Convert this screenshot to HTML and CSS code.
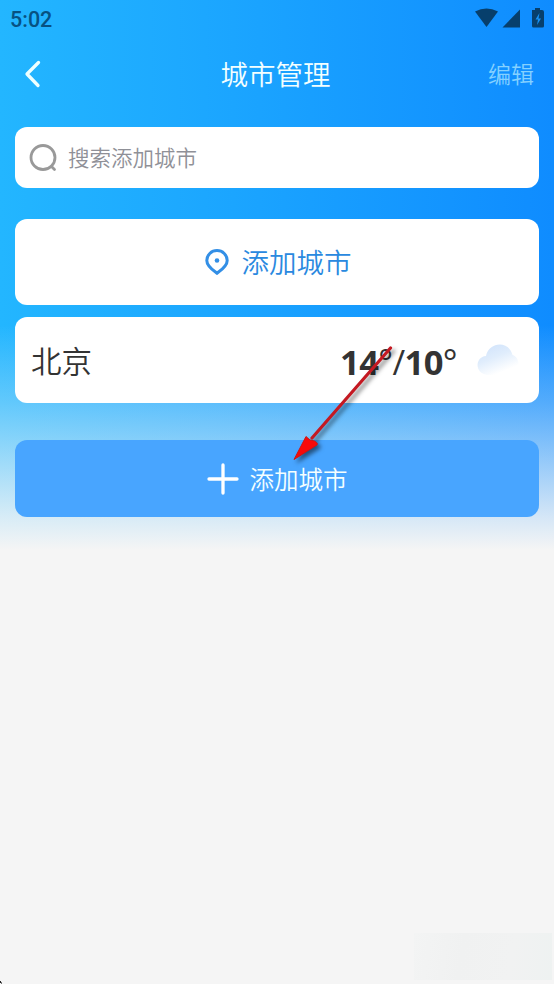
FILE: index.html
```html
<!DOCTYPE html>
<html lang="zh-CN">
<head>
<meta charset="utf-8">
<title>城市管理</title>
<link rel="stylesheet" href="styles.css">
</head>
<body>
<div class="screen">
  <header class="status">
    <span class="clock">5:02</span>
    <svg class="status-icons" width="70" height="22" viewBox="0 0 70 22">
      <path d="M0 3.500Q11.500-2.500 23 3.500L11.500 19Z"/>
      <path d="M45 1.500V19.500H27.500Z"/>
      <path d="M57 2H60V0H65V2H67Q69 2 69 4V18Q69 19.500 67.500 19.500H58.500Q57 19.500 57 18V4Q57 2 57 2Z"/>
      <path class="bolt" d="M64.500 5L60.500 11.500H63L62 17L66 10.500H63.500Z"/>
    </svg>
  </header>
  <nav class="nav">
    <svg class="back" width="18" height="28" viewBox="0 0 18 28"><path d="M14.500 2.500L3 14L14 25.500"/></svg>
    <h1 class="title">城市管理</h1>
    <span class="edit">编辑</span>
  </nav>
  <main class="content">
    <div class="search">
      <svg class="glass" width="28" height="28" viewBox="0 0 28 28"><circle cx="14" cy="13.500" r="12"/><path d="M22.500 22.500L25.500 25.500"/></svg>
      <span>搜索添加城市</span>
    </div>
    <div class="card add-card">
      <svg class="pin" width="24" height="26" viewBox="0 0 24 26"><path d="M12 24.200C8.500 21.500 1.800 17.500 1.800 11.500A10.200 9.900 0 0 1 22.200 11.500C22.200 17.500 15.500 21.500 12 24.200Z"/><circle cx="12" cy="11.500" r="2.300"/></svg>
      <span>添加城市</span>
    </div>
    <div class="card city-card">
      <span class="city">北京</span>
      <span class="temp">14<i>°</i><i>/</i>10<i>°</i></span>
      <svg class="cloud" width="42" height="34" viewBox="0 0 42 34">
        <defs><linearGradient id="cloud-fill" x1=".1" y1="0" x2=".65" y2="1"><stop offset="0" stop-color="#cfe2fb"/><stop offset=".45" stop-color="#e0edfc"/><stop offset=".9" stop-color="#fff"/></linearGradient></defs>
        <path d="M10.500 32C-2.500 31-2.500 14 9 13C12-1.500 32-2.500 35.500 12C45 15 43 32 31 32Z"/>
      </svg>
    </div>
    <div class="button">
      <svg class="plus" width="32" height="32" viewBox="0 0 32 32"><path d="M16 2V30M2 16H30"/></svg>
      <span>添加城市</span>
    </div>
  </main>
  <div class="patch"></div>
  <div class="corner"></div>
  <svg class="arrow" width="120" height="130" viewBox="0 0 120 130">
    <path class="shaft" d="M106.500 8L28 98"/>
    <path class="head" d="M10 119.500L22 96.500L26 100L30.500 101L32.500 102.500Q34 103.500 33 105Z"/>
  </svg>
</div>
</body>
</html>
```
FILE: styles.css
```css
* { box-sizing: border-box; }
body { margin: 0; }
.screen {
  position: relative;
  width: 554px;
  height: 984px;
  overflow: hidden;
  background:
    linear-gradient(to bottom, rgba(245,245,245,0) 325px, rgba(245,245,245,.3) 403px, rgba(245,245,245,.48) 440px, rgba(245,245,245,.86) 517px, #f5f5f5 550px),
    linear-gradient(90deg, #23b6ff 0, #1ba5ff 42%, #0f8cff 100%);
  font-family: "Noto Sans CJK SC", sans-serif;
}
.status {
  display: flex;
  justify-content: space-between;
  height: 38px;
  padding: 8px 9px 0 10px;
}
.clock {
  font: 500 21.500px/23px Roboto, sans-serif;
  color: #075182;
}
.status-icons { fill: #073f6c; }
.status-icons .bolt { fill: #1592f5; }
.nav {
  display: grid;
  grid-template-columns: 80px 1fr 80px;
  align-items: center;
  height: 72px;
  padding: 0 20px 0 24px;
  color: #f3ffff;
}
.back { fill: none; stroke: #eeffff; stroke-width: 3.300; stroke-linecap: round; stroke-linejoin: round; }
.title {
  margin: 0;
  padding: 0 7px 2px 0;
  font-size: 27.500px;
  line-height: 40px;
  font-weight: 350;
  text-align: center;
}
.edit { padding-bottom: 2px; font-size: 23px; font-weight: 350; line-height: 34px; text-align: right; color: #85d1ff; }
.content {
  display: flex;
  flex-direction: column;
  padding: 17px 15px 0;
}
.search {
  display: flex;
  align-items: center;
  gap: 11px;
  height: 61px;
  padding-left: 14px;
  margin-bottom: 31px;
  border-radius: 12px;
  background: #fff;
  color: #8f9097;
  font-size: 21.500px;
  font-weight: 350;
}
.search span, .add-card span { padding-bottom: 2px; }
.glass { fill: none; stroke: #999; stroke-width: 2.800; stroke-linecap: round; }
.card {
  display: flex;
  align-items: center;
  height: 86px;
  margin-bottom: 12px;
  border-radius: 12px;
  background: #fff;
}
.add-card {
  justify-content: center;
  gap: 13px;
  padding-left: 2px;
  color: #2a89df;
  font-size: 27.500px;
  font-weight: 350;
}
.pin { fill: none; stroke: #338fe6; stroke-width: 3; }
.pin circle { fill: #338fe6; stroke: none; }
.city-card { padding: 0 20px 0 16px; margin-bottom: 37px; color: #333; }
.city { flex: 1; font-size: 30.500px; font-weight: 350; }
.temp { padding-top: 3px; font: 700 34.500px/40px "Open Sans", sans-serif; letter-spacing: -.6px; white-space: nowrap; }
.temp i { font-style: normal; font-weight: 500; }
.cloud { margin-left: 20px; }
.cloud path { fill: url(#cloud-fill); }
.button {
  display: flex;
  align-items: center;
  justify-content: center;
  gap: 11px;
  height: 77px;
  border-radius: 12px;
  background: #48a5ff;
  color: #f5ffff;
  font-size: 24.500px;
  font-weight: 350;
}
.plus { fill: none; stroke: #fff; stroke-width: 3.300; stroke-linecap: round; }
.arrow { position: absolute; left: 284px; top: 340px; overflow: visible; filter: drop-shadow(3px 3px 2px rgba(0,0,0,.5)); }
.shaft { fill: none; stroke: #c41922; stroke-width: 3.200; stroke-linecap: round; }
.head { fill: #f80909; stroke: #cc1515; stroke-width: 1; }
.patch {
  position: absolute;
  left: 414px;
  top: 933px;
  width: 138px;
  height: 47px;
  background: linear-gradient(100deg, #f3f4f4, #f0f1f1 35%, #f1f2f2 70%, #eef2f1);
}
.corner { position: absolute; left: 0; top: 981px; width: 1px; height: 2px; background: #222; box-shadow: 1px 1px #777; }
```
